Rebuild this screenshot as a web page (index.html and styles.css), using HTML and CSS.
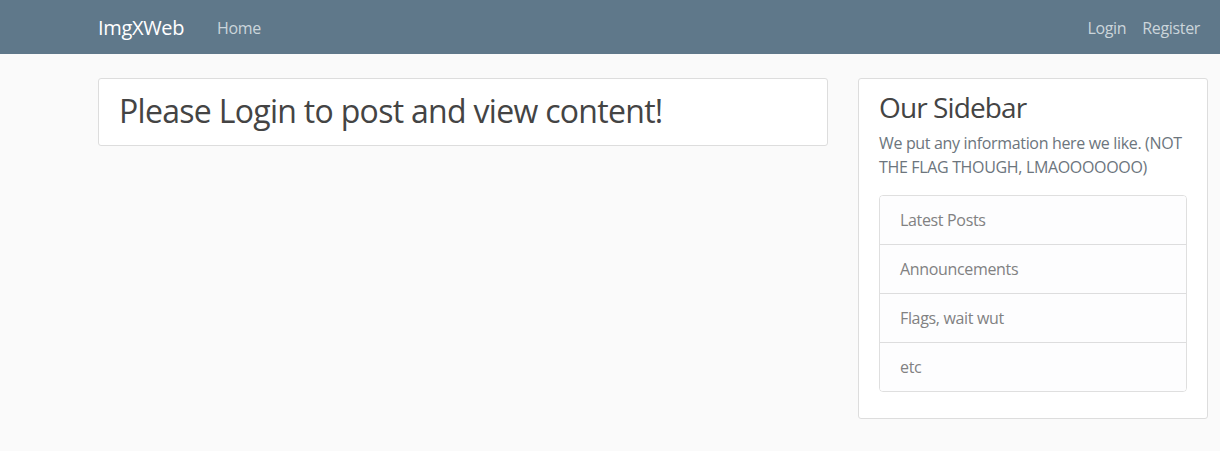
FILE: index.html
```html
<!DOCTYPE html>
<html lang="en">
<head>
<meta charset="utf-8">
<title>ImgXWeb</title>
<link rel="stylesheet" href="styles.css">
</head>
<body>
<header class="site-header">
  <nav class="navbar">
    <div class="nav-inner">
      <a class="brand" href="#">ImgXWeb</a>
      <div class="nav-left">
        <a class="nav-link" href="#">Home</a>
      </div>
      <div class="nav-right">
        <a class="nav-link" href="#">Login</a>
        <a class="nav-link" href="#">Register</a>
      </div>
    </div>
  </nav>
</header>
<main class="container">
  <div class="row">
    <div class="col-main">
      <div class="content-section">
        <h2 class="page-title">Please Login to post and view content!</h2>
      </div>
    </div>
    <div class="col-side">
      <div class="content-section">
        <h3 class="side-title">Our Sidebar</h3>
        <p class="text-muted">We put any information here we like. (NOT THE FLAG THOUGH, LMAOOOOOOO)</p>
        <ul class="list-group">
          <li class="list-group-item">Latest Posts</li>
          <li class="list-group-item">Announcements</li>
          <li class="list-group-item">Flags, wait wut</li>
          <li class="list-group-item">etc</li>
        </ul>
      </div>
    </div>
  </div>
</main>
</body>
</html>
```
FILE: styles.css
```css
* { box-sizing: border-box; }
html, body { margin: 0; padding: 0; }
body {
  background: #fafafa;
  color: #333333;
  font-family: "Open Sans", "Noto Sans", Arial, sans-serif;
  font-size: 16px;
  line-height: 1.5;
  letter-spacing: -0.021em;
  overflow: hidden;
}
a { text-decoration: none; }

.navbar {
  background-color: #5f788a;
  height: 54px;
}
.nav-inner {
  height: 54px;
  display: flex;
  align-items: center;
  padding: 0 12px 0 98px;
}
.brand {
  color: #ffffff;
  font-size: 20px;
  line-height: 30px;
  margin-right: 25px;
  margin-top: 2px;
}
.nav-left { display: flex; flex: 1; }
.nav-right { display: flex; }
.nav-link {
  color: #cbd5db;
  font-size: 16px;
  line-height: 24px;
  padding: 8px;
  margin-top: 1px;
}

.container {
  padding: 24px 12px 0 98px;
}
.row {
  display: grid;
  grid-template-columns: 730px 350px;
  column-gap: 30px;
  align-items: start;
}
.content-section {
  background: #ffffff;
  padding: 10px 20px;
  border: 1px solid #dddddd;
  border-radius: 3px;
  margin-bottom: 20px;
}
.page-title {
  margin: 3px 0 5px;
  font-size: 32px;
  font-weight: 400;
  line-height: 38px;
  letter-spacing: -0.7px;
  color: #444444;
}
.side-title {
  margin: 2px 0 6px;
  font-size: 28px;
  font-weight: 400;
  line-height: 33.6px;
  letter-spacing: -0.9px;
  color: #444444;
}
.text-muted {
  color: #6c757d;
  margin: 0 0 16px;
}
.list-group {
  list-style: none;
  padding: 0;
  margin: 0 0 16px;
  border: 1px solid rgba(0,0,0,.125);
  border-radius: 4px;
  overflow: hidden;
}
.list-group-item {
  padding: 12px 20px;
  line-height: 24px;
  background: #fdfdfe;
  color: #818182;
  border-top: 1px solid rgba(0,0,0,.125);
}
.list-group-item:first-child { border-top: 0; }
```
